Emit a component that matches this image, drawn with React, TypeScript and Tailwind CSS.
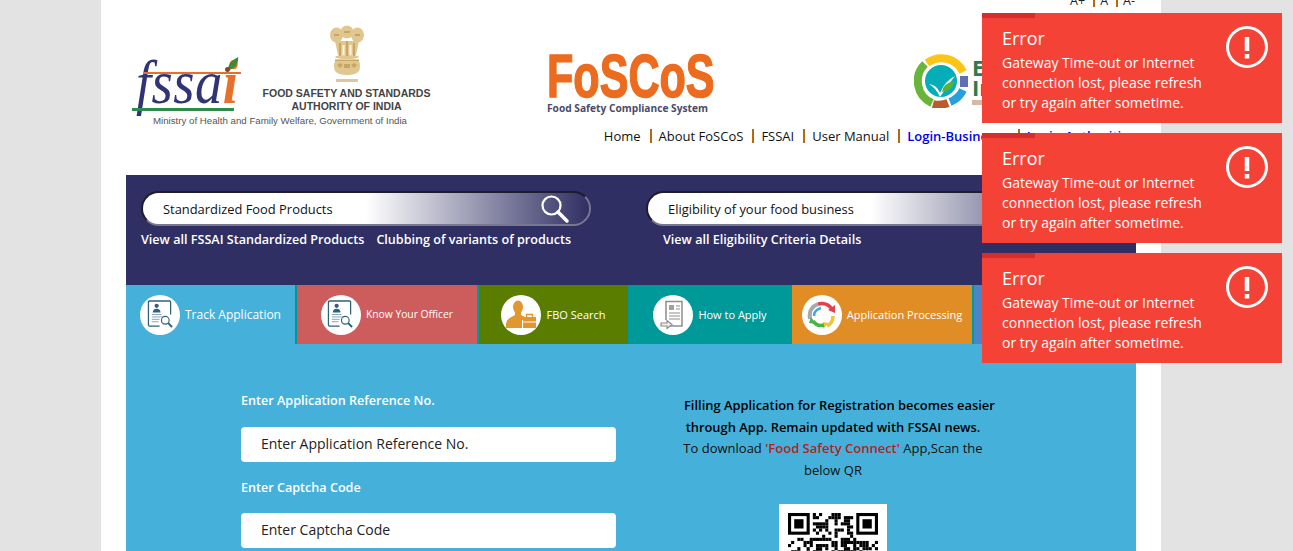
import { ReactNode } from "react";

const FONT = "font-['Open_Sans','Noto_Sans',sans-serif]";

// pseudo random modules for the QR code, finder squares are drawn apart
const qrCells = () => {
  const cells: [number, number][] = [];
  let seed = 73;
  for (let y = 0; y < 29; y++) {
    for (let x = 0; x < 29; x++) {
      seed = (seed * 137 + 59) % 1009;
      const inFinder = (x < 8 && y < 8) || (x > 20 && y < 8) || (x < 8 && y > 20);
      if (!inFinder && seed % 2 === 0) cells.push([x, y]);
    }
  }
  return cells;
};

const Finder = ({ x, y }: { x: number; y: number }) => (
  <g>
    <rect x={x + 0.5} y={y + 0.5} width="6" height="6" fill="none" stroke="#000" />
    <rect x={x + 2} y={y + 2} width="3" height="3" fill="#000" />
  </g>
);

const QrCode = () => (
  <div className="bg-white w-[108px] h-[108px] p-[9px] mx-auto shrink-0">
    <svg viewBox="0 0 29 29" className="w-[90px] h-[90px]">
      {qrCells().map(([x, y]) => (
        <rect key={`${x}-${y}`} x={x} y={y} width="1" height="1" fill="#000" />
      ))}
      <Finder x={0} y={0} />
      <Finder x={22} y={0} />
      <Finder x={0} y={22} />
    </svg>
  </div>
);

const Emblem = () => (
  <svg viewBox="0 0 34 58" className="w-[34px] h-[58px]">
    <g fill="#e0c68f">
      <ellipse cx="17" cy="7" rx="6.500" ry="6.500" />
      <ellipse cx="6.500" cy="10" rx="6.500" ry="7.500" />
      <ellipse cx="27.500" cy="10" rx="6.500" ry="7.500" />
      <path d="M5 16h24l-3 14H8z" />
      <ellipse cx="17" cy="32" rx="12" ry="2" />
      <path d="M5 36h24q2 5 0 10q-3 4-12 4t-12-4q-2-5 0-10z" />
    </g>
    <g fill="#c9a562">
      <rect x="9" y="18" width="2" height="13" />
      <rect x="16" y="16" width="2" height="15" />
      <rect x="23" y="18" width="2" height="13" />
      <rect x="5" y="34.500" width="24" height="1.500" />
      <path d="M7 40l3-2 3 2-3 3zM14 39h6v4h-6zM21 40l3-2 3 2-3 3z" />
      <path d="M14 6h6v2h-6zM4 9h5v2H4zM25 9h5v2h-5z" />
    </g>
    <g fill="#fbf5e6">
      <rect x="12.500" y="20" width="2" height="10" />
      <rect x="19.500" y="20" width="2" height="10" />
      <circle cx="11" cy="3" r="1" />
      <circle cx="23" cy="3" r="1" />
    </g>
    <rect x="6" y="54" width="22" height="3" fill="#dcc89f" />
  </svg>
);

const FssaiLogo = () => (
  <div className="relative w-[110px] h-[54px]">
    <span className="absolute left-[4px] top-[-6px] text-[62px] leading-[62px] italic text-[#2f3477] font-['Liberation_Serif',serif] tracking-[0.5px] whitespace-nowrap scale-x-[0.88] origin-left">
      fssa<span className="text-[#e8702a] font-bold">i</span>
    </span>
    <div className="absolute left-[11px] top-[15px] w-[98px] h-[2px] bg-[#e8702a]" />
    <div className="absolute left-0 top-[51px] w-[102px] h-[3px] bg-[#2f8b4b]" />
    <svg viewBox="0 0 14 14" className="absolute left-[93px] top-0 w-[14px] h-[14px]">
      <path d="M3 13C3 6 8 3 13 0c1 6-3 12-10 13z" fill="#3f8a34" />
    </svg>
    <div className="absolute left-[93px] top-[10px] w-[5px] h-[5px] rounded-full bg-[#7a4a2a]" />
  </div>
);

const EatRight = () => (
  <svg viewBox="0 0 54 54" className="w-[54px] h-[54px]">
    <g fill="none" strokeWidth="8">
      <path d="M13 9A24 24 0 0 1 49 18" stroke="#fcc515" />
      <path d="M18 49A24 24 0 0 1 11 10" stroke="#69b53c" />
      <path d="M34 49A24 24 0 0 1 19 50" stroke="#b95c2c" />
      <path d="M49 36A24 24 0 0 1 36 48" stroke="#26a0dd" />
      <path d="M50 22L50 33" stroke="#5f6fb4" />
    </g>
    <circle cx="27" cy="27" r="16" fill="#05adb8" />
    <path d="M15 30q8 1 11 9q5-12 15-17q-8 10-15 21q-4-9-11-13z" fill="#fff" />
    <path d="M28 38q0-8 12-11q0 9-12 11z" fill="#5cb038" />
  </svg>
);

const DocSearchIcon = () => (
  <svg viewBox="0 0 28 30" className="w-[27px] h-[29px]" fill="none" stroke="#2f6179">
    <path d="M13 27H2.500a1 1 0 0 1-1-1V2a1 1 0 0 1 1-1h21a1 1 0 0 1 1 1v13" strokeWidth="1.300" />
    <circle cx="10" cy="6" r="2.200" fill="#2f6179" stroke="none" />
    <path d="M6 13q0-4 4-4t4 4z" fill="#2f6179" stroke="none" />
    <path d="M5 15h10M5 17.500h12M5 20h8M5 22.500h7" strokeWidth="0.900" stroke="#7d9aa8" />
    <circle cx="19" cy="21" r="4" strokeWidth="1.200" />
    <path d="M22 24l4 4" strokeWidth="2" />
  </svg>
);

const PersonCaseIcon = () => (
  <svg viewBox="0 0 30 30" className="w-[30px] h-[30px]">
    <ellipse cx="12" cy="7" rx="5" ry="6.500" fill="#e2962e" />
    <path d="M9 12h6v3l4 2v3h-3v8H0v-3c0-5 3-7 9-10z" fill="#e2962e" />
    <rect x="17" y="17" width="13" height="11" fill="#e2962e" />
    <path d="M20.500 17v-2.500h6V17" stroke="#e2962e" strokeWidth="1.300" fill="none" />
    <path d="M17 22h13" stroke="#fff" strokeWidth="1" />
  </svg>
);

const FormIcon = () => (
  <svg viewBox="0 0 26 30" className="w-[26px] h-[30px]" fill="none" stroke="#8d8d8d">
    <path d="M6 20V1.500h16V26H10" strokeWidth="1.500" />
    <rect x="9" y="5" width="5" height="5" fill="#a0a0a0" stroke="none" />
    <path d="M16 6h4M16 9h4M9 13h11M9 16h11M9 19h11" strokeWidth="1.200" />
    <path d="M1 23h6v-2.500l5 4-5 4V26H1z" fill="#eee" strokeWidth="1.200" />
  </svg>
);

const CycleIcon = () => (
  <svg viewBox="0 0 32 32" className="w-[32px] h-[32px]" fill="none" strokeWidth="3.500">
    <path d="M4 20Q2 9 12 5" stroke="#a5a8ad" strokeWidth="4" />
    <path d="M12 5Q21 3 26 10" stroke="#e5404c" />
    <path d="M22 11l7 3 0-8z" fill="#e5404c" />
    <path d="M27 17Q27 24 21 27" stroke="#f4c430" />
    <path d="M23 24l-6 6 0-7z" fill="#f4c430" />
    <path d="M18 26Q11 28 7 22" stroke="#44b549" />
    <path d="M10 25l-7-1 2-6z" fill="#44b549" />
    <path d="M8 17Q8 11 15 9" stroke="#3fa7e0" strokeWidth="2.500" />
  </svg>
);

const Tab = ({ label, icon, color, width, size }: { label: string; icon: ReactNode; color: string; width: string; size: string }) => (
  <div className={`${color} ${width} h-[59px] shrink-0 flex items-center justify-center gap-[5px]`}>
    <div className="w-10 h-10 rounded-full bg-white flex items-center justify-center shrink-0">{icon}</div>
    <span className={`text-white whitespace-nowrap mt-[1px] ${size}`}>{label}</span>
  </div>
);

const SearchBar = ({ label }: { label: string }) => (
  <div className="w-[450px] h-[35px] rounded-full border-2 border-t-[#1d1d2b] border-l-[#1d1d2b] border-r-[#77778f] border-b-[#77778f] pl-5 flex items-center justify-between pr-5 bg-[linear-gradient(to_right,#fff_0%,#fff_50%,#302f63_100%)]">
    <span className="text-[12.900px] text-[#111] pt-[3px]">{label}</span>
    <svg viewBox="0 0 30 30" className="w-[30px] h-[30px] mr-[-1px]" fill="none" stroke="#fff">
      <circle cx="11.500" cy="11.500" r="9" strokeWidth="2.200" />
      <path d="M18 18l9 9" strokeWidth="3.500" strokeLinecap="round" />
    </svg>
  </div>
);

const Toast = () => (
  <div className="relative w-[300px] h-[110px] bg-[#f44336] text-white pl-5 pt-[13px] flex">
    <div className="absolute left-0 top-0 w-[53px] h-[5px] bg-[#d32f2f]" />
    <div className="w-[204px]">
      <div className="text-[18px] leading-6">Error</div>
      <div className="text-[14px] leading-5 mt-[3px]">Gateway Time-out or Internet connection lost, please refresh or try again after sometime.</div>
    </div>
    <svg viewBox="0 0 42 42" className="absolute left-[244px] top-[13px] w-[42px] h-[42px]" fill="none" stroke="#fff">
      <circle cx="21" cy="21" r="19.500" strokeWidth="3" />
      <path d="M21 11v14" strokeWidth="4.500" />
      <path d="M21 28v4.500" strokeWidth="4.500" />
    </svg>
  </div>
);

const Sep = () => <span className="w-[2px] h-[14px] bg-[#b66a10] ml-[9px] mr-[7px]" />;

const SizeSep = () => <span className="w-[2px] h-[12px] bg-[#b66a10] ml-[8px] mr-[5px]" />;

export default function App() {
  return (
    <div className={`h-[551px] overflow-hidden bg-[#e3e3e3] relative ${FONT}`}>
      <div className="w-[1060px] h-[551px] ml-[101px] bg-white overflow-hidden flex flex-col">
        <div className="h-[175px] shrink-0 flex flex-col">
          <div className="h-[7px] flex justify-end items-end pr-[26px] text-[12.500px] leading-none text-[#222] whitespace-nowrap">
            <span>A+</span><SizeSep /><span>A</span><SizeSep /><span>A-</span>
          </div>
          <div className="flex h-[119px] mt-[-1px]">
            <div className="w-[300px] ml-[31px] shrink-0 flex flex-col pt-[19px]">
              <div className="flex">
                <div className="mt-[32px]"><FssaiLogo /></div>
                <div className="flex flex-col items-center ml-[20px] w-[169px]">
                  <Emblem />
                  <div className="text-[10.500px] leading-[13px] font-semibold text-[#444] text-center whitespace-nowrap mt-[4px] font-['Liberation_Sans',sans-serif]">FOOD SAFETY AND STANDARDS<br />AUTHORITY OF INDIA</div>
                </div>
              </div>
              <div className="text-[9.700px] leading-3 text-[#555] mt-[2px] ml-[21px] whitespace-nowrap font-['Liberation_Sans',sans-serif]">Ministry of Health and Family Welfare, Government of India</div>
            </div>
            <div className="ml-[115px] mt-[47px] flex flex-col w-[170px] shrink-0">
              <div className="h-[46px] text-[62px] leading-[46px] font-bold text-[#ec6b1f] whitespace-nowrap font-['Liberation_Sans',sans-serif] [-webkit-text-stroke:1.500px_#ec6b1f] scale-x-[0.695] origin-left">FoSCoS</div>
              <div className="text-[10.200px] leading-3 font-bold text-[#4a4a6a] whitespace-nowrap mt-[3px]">Food Safety Compliance System</div>
            </div>
            <div className="ml-[197px] mt-[48px] shrink-0 flex gap-[4px]">
              <EatRight />
              <div className="text-[22px] leading-[20px] font-bold text-[#2b7d4f] pt-[3px]">
                E<br />In
                <div className="w-[12px] h-[5px] bg-[#d8b8a8] mt-[3px]" />
              </div>
            </div>
          </div>
          <div className="flex items-center justify-end pr-[26px] h-5 mt-[1px] text-[13px] leading-5 text-[#111] whitespace-nowrap">
            <span>Home</span><Sep /><span>About FoSCoS</span><Sep /><span>FSSAI</span><Sep /><span>User Manual</span><Sep />
            <span className="font-semibold text-[#0000f0] mr-[8px]">Login-Business</span><Sep /><span className="font-semibold text-[#0000f0]">Login-Authorities</span>
          </div>
        </div>

        <div className="w-[1010px] ml-[25px] flex-1 bg-[#45b1db] overflow-hidden">
          <div className="h-[110px] bg-[#302f63] pt-4 pl-[15px]">
            <div className="flex gap-[55px]">
              <div>
                <SearchBar label="Standardized Food Products" />
                <div className="flex gap-3 text-[12.600px] leading-[18px] font-semibold text-white mt-[5px] whitespace-nowrap">
                  <span>View all FSSAI Standardized Products</span>
                  <span>Clubbing of variants of products</span>
                </div>
              </div>
              <div>
                <SearchBar label="Eligibility of your food business" />
                <div className="text-[12.600px] leading-[18px] font-semibold text-white mt-[5px] ml-[17px]">View all Eligibility Criteria Details</div>
              </div>
            </div>
          </div>

          <div className="flex">
            <Tab label="Track Application" icon={<DocSearchIcon />} color="bg-[#45b1db] border-r-2 border-[#009999]" width="w-[171px]" size="text-[12px]" />
            <Tab label="Know Your Officer" icon={<DocSearchIcon />} color="bg-[#cd5c5c] border-r-2 border-[#009999]" width="w-[182px]" size="text-[10.300px]" />
            <Tab label="FBO Search" icon={<PersonCaseIcon />} color="bg-[#5a7d00]" width="w-[149px]" size="text-[11px]" />
            <Tab label="How to Apply" icon={<FormIcon />} color="bg-[#009999]" width="w-[164px]" size="text-[11px]" />
            <Tab label="Application Processing" icon={<CycleIcon />} color="bg-[#e08d25] border-r-2 border-[#009999]" width="w-[182px]" size="text-[11px]" />
            <div className="flex-1 h-[59px] bg-[#4a86c5]" />
          </div>

          <div className="flex">
            <div className="w-[375px] ml-[115px] pt-[48px] shrink-0">
              <div className="text-[12.600px] leading-[18px] font-semibold text-white">Enter Application Reference No.</div>
              <div className="h-[35px] mt-[17px] bg-white rounded-[4px] pl-5 pb-[2px] flex items-center text-[14px] text-[#222]">Enter Application Reference No.</div>
              <div className="text-[12.600px] leading-[18px] font-semibold text-white mt-[17px]">Enter Captcha Code</div>
              <div className="h-[35px] mt-[16px] bg-white rounded-[4px] pl-5 pb-[2px] flex items-center text-[14px] text-[#222]">Enter Captcha Code</div>
            </div>
            <div className="w-[300px] ml-[67px] pt-[51px] text-center text-[13px] leading-[21.500px] text-[#111] shrink-0">
              <div className="font-semibold text-[12.900px] text-black">
                <div className="whitespace-nowrap text-left ml-[1px]">Filling Application for Registration becomes easier</div>
                <div>through App. Remain updated with FSSAI news.</div>
              </div>
              <div>To download <span className="font-semibold text-[#b22222]">'Food Safety Connect'</span> App,Scan the below QR</div>
              <div className="mt-[23px]"><QrCode /></div>
            </div>
          </div>
        </div>
      </div>

      <div className="absolute left-[982px] top-[13px] flex flex-col gap-[10px]">
        <Toast />
        <Toast />
        <Toast />
      </div>
    </div>
  );
}
